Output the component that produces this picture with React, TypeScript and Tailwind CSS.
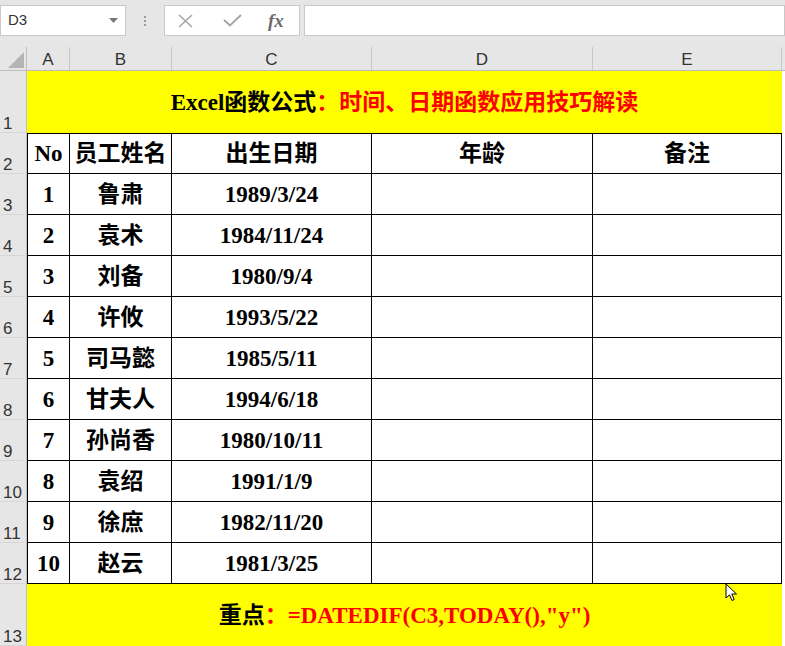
import React from "react";

const cols = [
  { key: "A", w: "w-[43px]" },
  { key: "B", w: "w-[102px]" },
  { key: "C", w: "w-[200px]" },
  { key: "D", w: "w-[221px]" },
  { key: "E", w: "w-[189px]" },
];

const people = [
  ["1", "鲁肃", "1989/3/24"],
  ["2", "袁术", "1984/11/24"],
  ["3", "刘备", "1980/9/4"],
  ["4", "许攸", "1993/5/22"],
  ["5", "司马懿", "1985/5/11"],
  ["6", "甘夫人", "1994/6/18"],
  ["7", "孙尚香", "1980/10/11"],
  ["8", "袁绍", "1991/1/9"],
  ["9", "徐庶", "1982/11/20"],
  ["10", "赵云", "1981/3/25"],
];

const cellFont = "font-['Liberation_Serif','Noto_Sans_CJK_SC',serif] font-bold text-black";

function RowHead({ n, h }: { n: number; h: string }) {
  return (
    <div
      className={`${h} w-[27px] shrink-0 bg-[#e6e6e6] border-r border-b border-r-[#bfbfbf] border-b-[#d6d6d6] flex items-end pl-[3px] text-[17px] leading-[17px] text-[#333] font-['Liberation_Sans',sans-serif]`}
    >
      {n}
    </div>
  );
}

function DataRow({ n, cells, top }: { n: number; cells: string[]; top?: boolean }) {
  return (
    <div className="flex">
      <RowHead n={n} h="h-[41px]" />
      {cols.map((c, i) => (
        <div
          key={c.key}
          className={`${c.w} h-[41px] shrink-0 border-r border-b border-black ${top ? "border-t" : ""} ${
            i === 0 ? "border-l" : ""
          } flex items-center justify-center text-[23px] leading-none ${cellFont}`}
        >
          {cells[i] ?? ""}
        </div>
      ))}
      <div className="w-[3px] h-[41px] bg-white" />
    </div>
  );
}

export default function App() {
  return (
    <div className="w-[785px] h-[646px] overflow-hidden bg-white relative select-none">
      {/* formula bar */}
      <div className="h-[47px] bg-[#e6e6e6] flex items-start pt-[5px]">
        <div className="w-[126px] h-[31px] bg-white border border-[#c8c8c8] flex items-center justify-between pl-[7px] pr-[7px]">
          <span className="text-[15px] text-[#333] font-['Liberation_Sans',sans-serif]">D3</span>
          <svg width="9" height="5" viewBox="0 0 9 5">
            <path d="M0 0 H9 L4.5 5 Z" fill="#7a7a7a" />
          </svg>
        </div>
        <div className="w-[38px] h-[31px] flex flex-col items-center justify-center gap-[2px]">
          <span className="w-[2px] h-[2px] bg-[#9a9a9a]" />
          <span className="w-[2px] h-[2px] bg-[#9a9a9a]" />
          <span className="w-[2px] h-[2px] bg-[#9a9a9a]" />
        </div>
        <div className="w-[136px] h-[31px] bg-white border border-[#c8c8c8] flex items-center">
          <svg className="ml-[13px]" width="15" height="14" viewBox="0 0 15 14">
            <path d="M1 1 L14 13 M14 1 L1 13" stroke="#a6a6a6" strokeWidth="1.6" />
          </svg>
          <svg className="ml-[30px]" width="19" height="13" viewBox="0 0 19 13">
            <path d="M1 6 L7 11.5 L18 1" stroke="#a6a6a6" strokeWidth="2" fill="none" />
          </svg>
          <span className="ml-[26px] text-[19px] italic font-bold text-[#6b6b6b] font-['Liberation_Serif',serif] leading-none">
            fx
          </span>
        </div>
        <div className="ml-[4px] flex-1 h-[31px] bg-white border border-[#c8c8c8]" />
      </div>

      {/* column headers */}
      <div className="flex h-[24px] bg-[#e6e6e6] border-b border-[#bdbdbd]">
        <div className="w-[27px] h-full border-r border-[#bfbfbf] relative">
          <svg width="27" height="23" viewBox="0 0 27 23">
            <polygon points="24,5 24,21 8,21" fill="#b4b4b4" />
          </svg>
        </div>
        {cols.map((c) => (
          <div
            key={c.key}
            className={`${c.w} h-full border-r border-[#c8c8c8] flex items-center justify-center pt-[2px] text-[17px] text-[#333] font-['Liberation_Sans',sans-serif]`}
          >
            {c.key}
          </div>
        ))}
        <div className="flex-1" />
      </div>

      {/* row 1 */}
      <div className="flex">
        <RowHead n={1} h="h-[62px]" />
        <div className={`w-[755px] h-[62px] bg-[#ffff00] flex items-center justify-center text-[23px] leading-none ${cellFont}`}>
          <span>Excel函数公式</span>
          <span className="text-[#ff0000]">：时间、日期函数应用技巧解读</span>
        </div>
        <div className="w-[3px] h-[62px] bg-white" />
      </div>

      {/* row 2 */}
      <DataRow n={2} cells={["No", "员工姓名", "出生日期", "年龄", "备注"]} top />

      {people.map((p, i) => (
        <DataRow key={p[0]} n={i + 3} cells={p} />
      ))}

      {/* row 13 */}
      <div className="flex">
        <RowHead n={13} h="h-[62px]" />
        <div className={`w-[755px] h-[62px] bg-[#ffff00] flex items-center justify-center text-[23px] leading-none ${cellFont}`}>
          <span>重点</span>
          <span className="text-[#ff0000]">：=DATEDIF(C3,TODAY(),"y")</span>
        </div>
        <div className="w-[3px] h-[62px] bg-white" />
      </div>

      {/* mouse pointer */}
      <svg className="absolute left-[725px] top-[583px]" width="13" height="19" viewBox="0 0 13 19">
        <path
          d="M1 1 L1 15 L4.5 11.8 L7 17.5 L9.2 16.5 L6.8 11 L11.5 11 Z"
          fill="#fff"
          stroke="#000"
          strokeWidth="1"
          strokeLinejoin="round"
        />
      </svg>
    </div>
  );
}
